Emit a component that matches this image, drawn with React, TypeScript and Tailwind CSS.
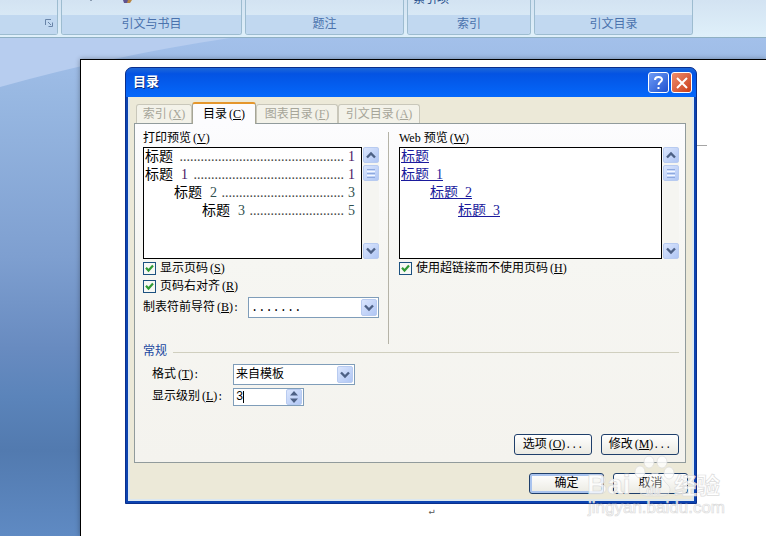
import type { ReactNode } from "react";

const SONG = "font-['Liberation_Mono','Noto_Sans_CJK_SC',monospace]";

const ribbonGroups = [
  { label: "引文与书目", width: "w-[181px]" },
  { label: "题注", width: "w-[159px]" },
  { label: "索引", width: "w-[124px]" },
  { label: "引文目录", width: "w-[159px]" },
];

const entries = [
  { title: "标题", no: "", page: "1", dots: 47, pad: "pl-px", numColor: "text-[#4b1464]" },
  { title: "标题", no: "1", page: "1", dots: 43, pad: "pl-px", numColor: "text-[#4b1464]" },
  { title: "标题", no: "2", page: "3", dots: 35, pad: "pl-[30px]", numColor: "text-[#2f4f4f]" },
  { title: "标题", no: "3", page: "5", dots: 27, pad: "pl-[58px]", numColor: "text-[#2f4f4f]" },
];

function Key({ k, after = "" }: { k: string; after?: string }) {
  return (
    <>
      <span className="ml-0.5 font-['Liberation_Serif',serif]">
        (<u className="underline-offset-1">{k}</u>)
      </span>
      {after && <span className="text-[10px]">{after}</span>}
    </>
  );
}

function Chevron({ up = false }: { up?: boolean }) {
  return (
    <svg viewBox="0 0 10 8" className={up ? "h-2 w-2.5 rotate-180" : "h-2 w-2.5"} fill="none" stroke="#4d6185" strokeWidth="2.4">
      <path d="M1 1.5 5 5.5 9 1.5" />
    </svg>
  );
}

const arrowBox = "flex items-center justify-center rounded-[2px] border border-[#b8cbf0] bg-linear-to-br from-[#dbe6fd] to-[#b0c6f4]";

function Scrollbar() {
  return (
    <div className="flex w-4 shrink-0 flex-col bg-[#f5f5f1]">
      <button aria-label="向上滚动" className={`${arrowBox} h-4`}>
        <Chevron up />
      </button>
      <div className={`${arrowBox} mt-0.5 h-4 flex-col gap-px`}>
        <i className="h-px w-2 bg-[#8ea9de]" />
        <i className="h-px w-2 bg-[#f4f8ff]" />
        <i className="h-px w-2 bg-[#8ea9de]" />
        <i className="h-px w-2 bg-[#f4f8ff]" />
        <i className="h-px w-2 bg-[#8ea9de]" />
      </div>
      <button aria-label="向下滚动" className={`${arrowBox} mt-auto h-4`}>
        <Chevron />
      </button>
    </div>
  );
}

function Check({ children }: { children: ReactNode }) {
  return (
    <label className="flex h-[18px] items-center gap-1">
      <span className="grid size-[13px] place-items-center">
        <input type="checkbox" defaultChecked className="peer col-start-1 row-start-1 size-[13px] appearance-none border border-[#1c5180] bg-[#f7f8f5]" />
        <svg viewBox="0 0 9 9" className="pointer-events-none invisible col-start-1 row-start-1 size-[9px] peer-checked:visible" fill="none" stroke="#2f9a34" strokeWidth="2.2">
          <path d="M1 3.8 3.5 6.5 8 1.5" />
        </svg>
      </span>
      <span>{children}</span>
    </label>
  );
}

function Combo({ id, value, className }: { id: string; value: string; className: string }) {
  return (
    <div className={`grid h-[21px] items-center border border-[#7f9db9] bg-white ${className}`}>
      <select id={id} className="col-start-1 row-start-1 h-full w-full appearance-none bg-transparent pl-0.5 outline-none">
        <option>{value}</option>
      </select>
      <span className={`${arrowBox} pointer-events-none col-start-1 row-start-1 mr-px h-[17px] w-4 justify-self-end`}>
        <Chevron />
      </span>
    </div>
  );
}

function XpButton({ children, width, primary = false }: { children: ReactNode; width: string; primary?: boolean }) {
  return (
    <button
      className={`flex h-[21px] items-center justify-center rounded-[3px] border border-[#1f3f6b] bg-linear-to-b from-white to-[#ebeae2] ${width} ${
        primary ? "shadow-[inset_0_0_0_2px_#a9c3ee]" : ""
      }`}
    >
      <span>{children}</span>
    </button>
  );
}

function Tab({ children, width }: { children: ReactNode; width: string }) {
  return (
    <button disabled className={`h-[19px] rounded-t-[3px] border border-b-0 border-[#c9c7ba] bg-[#f3f2e9] text-[#a6a599] ${width}`}>
      {children}
    </button>
  );
}

function Ribbon() {
  return (
    <header className="flex h-[38px] gap-[3px] overflow-hidden border-b border-[#8fb0c4] bg-linear-to-b from-[#d3e3f2] to-[#dff0fa] text-xs text-[#4a72ad]">
      <div className="flex h-[35px] w-[58px] shrink-0 flex-col rounded-br-[3px] border-r border-b border-[#9dbcd0]">
        <div className="h-[15px]" />
        <div className="flex flex-1 justify-end bg-[#c1d8f0] pt-1 pr-1">
          <svg viewBox="0 0 8 8" className="size-2" fill="none" stroke="#6884a8">
            <path d="M.5 6V.5H6M3 3l3 3M7.5 3.5v4h-4" />
          </svg>
        </div>
      </div>
      {ribbonGroups.map((group) => (
        <div key={group.label} className={`flex h-[35px] shrink-0 flex-col overflow-hidden rounded-b-[3px] border border-t-0 border-[#9dbcd0] ${group.width}`}>
          <div className="flex h-[15px] shrink-0 items-start">
            {group.label === "引文与书目" && (
              <svg viewBox="0 0 48 4" className="ml-6 h-1 w-12">
                <path d="M5 0v1" stroke="#43546e" />
                <path d="M37 0h5v3h-4z" fill="#5f538f" />
                <path d="M42 0h4l-2 3h-3z" fill="#b98642" />
              </svg>
            )}
            {group.label === "索引" && <span className="-mt-2 ml-[5px] leading-4 text-[#27508c]">索引项</span>}
          </div>
          <div className="flex flex-1 items-center justify-center bg-[#c1d8f0] pt-px">{group.label}</div>
        </div>
      ))}
    </header>
  );
}

function TitleBar() {
  return (
    <div className="flex h-[29px] items-center gap-0.5 rounded-t-[6px] bg-linear-to-b from-[#1c66d8] via-[#0453e3] via-20% to-[#0568fb] pr-1 pl-[7px] text-white">
      <h1 className="mr-auto text-[13px] font-bold [text-shadow:1px_1px_#0a2f80]">目录</h1>
      <button aria-label="帮助" className="flex size-[21px] items-center justify-center rounded-[3px] border border-white bg-linear-to-br from-[#6f9bf5] to-[#1e50d0]">
        <svg viewBox="0 0 13 15" className="h-[15px] w-[13px]" fill="none" stroke="#fff" strokeWidth="2">
          <path d="M3 5C3 1 10 1 10 4.5 10 7 6.5 7 6.5 10M6.5 12v2" />
        </svg>
      </button>
      <button aria-label="关闭" className="flex size-[21px] items-center justify-center rounded-[3px] border border-white bg-linear-to-br from-[#ee8c6c] to-[#c93a12]">
        <svg viewBox="0 0 12 12" className="size-3" fill="none" stroke="#fff" strokeWidth="2">
          <path d="m1 1 10 10M11 1 1 11" />
        </svg>
      </button>
    </div>
  );
}

function Watermark() {
  return (
    <svg viewBox="0 0 142 68" className="pointer-events-none absolute top-[452px] left-[584px] h-[68px] w-[142px] font-['Liberation_Sans','Noto_Sans_CJK_SC',sans-serif]" fill="#fff" fillOpacity=".8" stroke="#dcdcdc" strokeWidth=".7" aria-hidden="true">
      <ellipse cx="56" cy="20" rx="5" ry="6" />
      <ellipse cx="65" cy="10" rx="5" ry="6" />
      <ellipse cx="78" cy="10" rx="5" ry="6" />
      <ellipse cx="85" cy="21" rx="5" ry="6" />
      <path d="M71 21c-6 0-9 8-14 12-4 5-1 11 6 11 4 0 12 0 16 0 7 0 9-7 5-11-5-4-7-12-13-12Z" fillOpacity=".35" />
      <text x="3" y="42" fontSize="28" fontWeight="bold">Bai</text>
      <text x="62" y="43" fontSize="12" fontWeight="bold" fillOpacity=".6">du</text>
      <text x="90" y="42" fontSize="23" fontWeight="bold">经验</text>
      <text x="4" y="61" fontSize="17">jingyan.baidu.com</text>
    </svg>
  );
}

export default function App() {
  return (
    <div className={`relative flex min-h-screen flex-col overflow-hidden bg-[linear-gradient(#a3c0ea_7%,#98b8e2_18%,#7e9fd0_48%,#688bc0_65%,#5b84ba_74%,#527aaf_84%,#5f8ac3)] text-xs leading-4 text-black ${SONG}`}>
      <svg viewBox="0 0 260 50" className="absolute top-[38px] left-0 h-[50px] w-[260px]">
        <path d="M0 0H230Q110 18 0 49Z" fill="#b7cdef" />
      </svg>
      <div className="relative">
        <Ribbon />
      </div>

      <main className="relative mt-[21px] ml-20 flex-1 border-t border-l border-black bg-white pt-[7px] pl-11 shadow-[0_0_5px_#00000055]">
        <div className="relative mr-[69px]">
          <i className="absolute top-[78px] -right-2.5 h-px w-2.5 bg-[#a5a5a5]" />
          <section role="dialog" aria-label="目录" className="flex flex-col rounded-t-[7px] border border-[#0a2f8c] bg-[#0c43b0]">
            <TitleBar />
            <div className="mx-0.5 mb-0.5 flex flex-col border-x-2 border-b-2 border-[#dce8f0] bg-[#ece9d8] px-1 pt-[5px] pb-[5px]">
              <div className="flex items-end pl-0.5">
                <Tab width="w-14">索引<Key k="X" /></Tab>
                <button className="relative -mb-px h-[22px] w-16 rounded-t-[3px] border border-t-2 border-b-0 border-[#a5a596] border-t-[#e5972d] bg-[#fcfcfe]">
                  目录<Key k="C" />
                </button>
                <Tab width="w-[82px]">图表目录<Key k="F" /></Tab>
                <Tab width="w-[82px]">引文目录<Key k="A" /></Tab>
              </div>

              <div className="mr-0.5 flex flex-col border border-[#919b9c] bg-linear-to-b from-[#fcfcfe] via-[#f6f6f2] via-40% to-[#f4f3ee] pt-1.5 pr-1.5 pb-[7px] pl-2">
                <div className="flex">
                  <div className="w-[236px] shrink-0">
                    <p>打印预览<Key k="V" /></p>
                    <div className="flex h-28 justify-between gap-px">
                      <ol className="flex-1 border border-black bg-white pr-1.5 font-['Liberation_Serif','Noto_Sans_CJK_SC',serif] text-sm leading-[18px]">
                        {entries.map((e, i) => (
                          <li key={i} className={`flex ${e.pad}`}>
                            <span>{e.title}</span>
                            {e.no && <span className={`ml-2 ${e.numColor}`}>{e.no}</span>}
                            <span className="mr-1 ml-auto text-[#444]">{".".repeat(e.dots)}</span>
                            <span className={e.numColor}>{e.page}</span>
                          </li>
                        ))}
                      </ol>
                      <Scrollbar />
                    </div>
                    <Check>显示页码<Key k="S" /></Check>
                    <Check>页码右对齐<Key k="R" /></Check>
                    <div className="mt-0.5 flex items-center justify-between">
                      <label htmlFor="leader">制表符前导符<Key k="B" after=":" /></label>
                      <Combo id="leader" value="......." className="w-[131px]" />
                    </div>
                  </div>

                  <div className="mt-0.5 mr-2.5 ml-[9px] h-[212px] w-px bg-[#b5b3a7]" />

                  <div className="min-w-0 flex-1">
                    <p><span className="font-['Liberation_Serif',serif]">Web </span>预览<Key k="W" /></p>
                    <div className="flex h-28 gap-px">
                      <ul className="flex-1 border border-black bg-white font-['Liberation_Serif','Noto_Sans_CJK_SC',serif] text-sm leading-[18px]">
                        {entries.map((e, i) => (
                          <li key={i} className={e.pad}>
                            <a href="#" className="text-[#1a1a9c] underline">
                              {e.title}
                              {e.no && <>&nbsp;&nbsp;{e.no}</>}
                            </a>
                          </li>
                        ))}
                      </ul>
                      <Scrollbar />
                    </div>
                    <Check>使用超链接而不使用页码<Key k="H" /></Check>
                  </div>
                </div>

                <div className="flex items-center gap-1.5 text-[#1a47a0]">
                  常规
                  <span className="h-px flex-1 bg-[#d0cfbf]" />
                </div>
                <div className="mt-1 flex items-center pl-[9px]">
                  <label htmlFor="format" className="w-[81px]">格式<Key k="T" after=":" /></label>
                  <Combo id="format" value="来自模板" className="w-[122px]" />
                </div>
                <div className="mt-[3px] flex items-center pl-[9px]">
                  <label htmlFor="levels" className="w-[81px]">显示级别<Key k="L" after=":" /></label>
                  <div className="relative flex h-[18px] w-[71px] items-center border border-[#7f9db9] bg-white pr-px">
                    <input id="levels" defaultValue="3" className="min-w-0 flex-1 bg-transparent pl-0.5 caret-transparent outline-none" />
                    <i className="absolute left-[9px] h-3 w-px bg-black" />
                    <span className={`${arrowBox} size-4 flex-col`}>
                      <svg viewBox="0 0 8 12" className="h-3 w-2" fill="#4d6185">
                        <path d="M4 0 8 4.500H0ZM4 12 0 7.500H8Z" />
                      </svg>
                    </span>
                  </div>
                </div>
                <div className="mt-7 flex justify-end gap-[9px]">
                  <XpButton width="w-[78px]">选项<Key k="O" after="..." /></XpButton>
                  <XpButton width="w-[78px]">修改<Key k="M" after="..." /></XpButton>
                </div>
              </div>

              <div className="mt-2.5 flex justify-end gap-[9px]">
                <XpButton width="w-[75px]" primary>确定</XpButton>
                <XpButton width="w-[75px]">取消</XpButton>
              </div>
            </div>
          </section>
        </div>
        <p className="mr-7 text-center text-[10px] text-[#555]">↵</p>
      </main>
      <Watermark />
    </div>
  );
}
